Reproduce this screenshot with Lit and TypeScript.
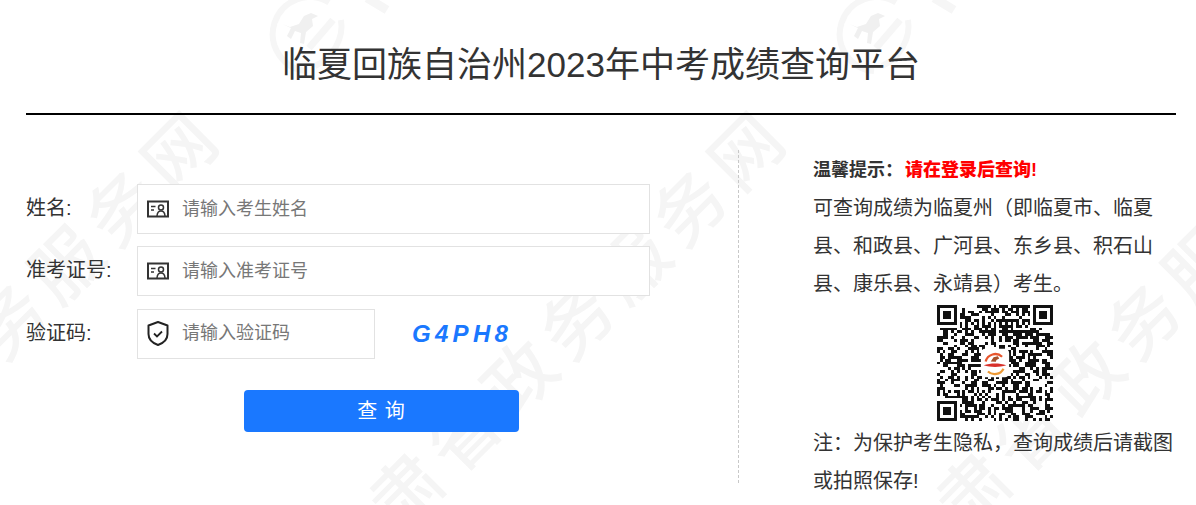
import { LitElement, css, html } from 'lit';
import { customElement } from 'lit/decorators.js';

// seeded so the fake QR modules stay put between runs
function qrPath(size: number): string {
  let seed = 20230;
  const rnd = () => {
    seed = (seed * 1103515245 + 12345) & 0x7fffffff;
    return (seed >> 12) % 100;
  };
  const cells: boolean[][] = [];
  for (let y = 0; y < size; y++) {
    cells.push([]);
    for (let x = 0; x < size; x++) cells[y].push(rnd() < 50);
  }
  const finder = (ox: number, oy: number) => {
    for (let y = -1; y < 8; y++) {
      for (let x = -1; x < 8; x++) {
        const px = ox + x;
        const py = oy + y;
        if (px < 0 || py < 0 || px >= size || py >= size) continue;
        const ring = x >= 0 && x <= 6 && y >= 0 && y <= 6 && (x === 0 || x === 6 || y === 0 || y === 6);
        const core = x >= 2 && x <= 4 && y >= 2 && y <= 4;
        cells[py][px] = ring || core;
      }
    }
  };
  finder(0, 0);
  finder(size - 7, 0);
  finder(0, size - 7);
  for (let i = 8; i < size - 8; i++) {
    cells[6][i] = i % 2 === 0;
    cells[i][6] = i % 2 === 0;
  }
  let d = '';
  cells.forEach((row, y) =>
    row.forEach((on, x) => {
      if (on) d += `M${x} ${y}h1v1h-1z`;
    })
  );
  return d;
}

const idIcon = html`<svg class="icon" width="22" height="18" viewBox="0 0 22 18">
  <rect x="1" y="1.500" width="20" height="15" fill="none" stroke="#333" stroke-width="2"></rect>
  <path d="M4 6.500h4.500M4 10h3" stroke="#333" stroke-width="1.500" fill="none"></path>
  <circle cx="14" cy="7.500" r="2.500" fill="none" stroke="#333" stroke-width="1.500"></circle>
  <path d="M10 16c.2-3.400 1.800-5 4-5s3.800 1.600 4 5" fill="none" stroke="#333" stroke-width="1.500"></path>
</svg>`;

const shieldIcon = html`<svg class="icon" width="22" height="25" viewBox="0 0 22 25">
  <path d="M11 1 20.500 4.500v8.500c0 5.300-3.800 9-9.500 11C5.300 22 1.500 18.300 1.500 13V4.500z" fill="none" stroke="#222" stroke-width="2" stroke-linejoin="round"></path>
  <path d="M7 12.500l3 3 5-5" fill="none" stroke="#222" stroke-width="1.800"></path>
</svg>`;

@customElement('app-root')
export class AppRoot extends LitElement {
  static styles = css`
    :host {
      display: block;
      position: relative;
      height: 505px;
      overflow: hidden;
      background: #fff;
      font-family: "Liberation Sans", "Noto Sans CJK SC", sans-serif;
      color: #333;
    }
    .marks {
      position: absolute;
      inset: 0;
      pointer-events: none;
    }
    .mark {
      position: absolute;
      white-space: nowrap;
      font-size: 70px;
      font-weight: 500;
      letter-spacing: 10px;
      line-height: 80px;
      color: #f5f5f5;
      transform-origin: 100% 50%;
      transform: translate(-100%, -50%) rotate(-45deg);
    }
    .logo {
      position: absolute;
    }
    .page {
      position: relative;
      padding: 0 20px 0 26px;
    }
    h1 {
      margin: 0;
      height: 113px;
      box-sizing: border-box;
      padding-top: 41px;
      font-size: 35px;
      line-height: 48px;
      font-weight: 400;
      text-align: center;
    }
    .rule {
      height: 2px;
      background: #000;
    }
    .content {
      display: flex;
      padding-top: 35px;
    }
    .form {
      width: 712px;
      flex: none;
      box-sizing: border-box;
      padding-top: 34px;
    }
    .row {
      display: flex;
      align-items: center;
      height: 50px;
      margin-bottom: 12.400px;
    }
    label {
      width: 111px;
      flex: none;
      padding-bottom: 5px;
      font-size: 20px;
    }
    .field {
      display: flex;
      align-items: center;
      box-sizing: border-box;
      width: 513px;
      height: 50px;
      padding-left: 9px;
      gap: 13px;
      border: 1px solid #e2e2e2;
      background: #fff;
    }
    .field.short {
      width: 238px;
    }
    .icon {
      flex: none;
    }
    input {
      flex: 1;
      min-width: 0;
      border: 0;
      outline: 0;
      padding: 0;
      background: transparent;
      font-family: inherit;
      font-size: 18px;
    }
    input::placeholder {
      color: #777;
    }
    .code {
      margin-left: 37px;
      font-size: 24px;
      font-weight: 700;
      font-style: italic;
      letter-spacing: 4.300px;
      color: #1a78ff;
    }
    .submit {
      display: block;
      width: 275px;
      height: 42px;
      margin: 30.800px 0 0 218px;
      padding: 0 0 2px;
      border: 0;
      border-radius: 4px;
      background: #1a78ff;
      color: #fff;
      font-family: inherit;
      font-size: 20px;
      letter-spacing: 1px;
    }
    .notes {
      flex: 1;
      height: 333px;
      padding-left: 74px;
      border-left: 1px dashed #c8c8c8;
      font-size: 20px;
      line-height: 38px;
    }
    .notes p {
      margin: 0;
    }
    .tip {
      padding-top: 2px;
      font-size: 18px;
      line-height: 37px;
      font-weight: 700;
    }
    .tip b {
      margin-left: 2px;
      color: #f00;
    }
    .qr {
      display: block;
      margin: 2px auto 3px;
    }
  `;

  private qr = qrPath(41);

  private marks() {
    return [0, 567, 1134].map(
      (dx) => html`
        <div class="mark" style="left:${212 + dx}px;top:121px">甘肃省政务服务网</div>
        <svg class="logo" style="left:${255 + dx}px;top:-10px" width="140" height="90" viewBox="0 0 140 90" fill="none" stroke="#f6f6f6">
          <path d="M74 12.500A37 37 0 1 0 52 81" stroke-width="6"></path>
          <path d="M86 30c3 18-8 38-26 46" stroke-width="6"></path>
          <path d="M54 58 78 30" stroke-width="7"></path>
          <path d="M27 34l8 3 9-3 5-8 7-3 7 3-6 3 1 7-7 6-2 12-4-1 1-10-6-2-4 8-4-3 4-8z" fill="#f0f0f0" stroke="none"></path>
          <path d="M112 8l20 12" stroke-width="9"></path>
        </svg>
      `
    );
  }

  render() {
    return html`
      <div class="marks">${this.marks()}</div>
      <div class="page">
        <h1>临夏回族自治州2023年中考成绩查询平台</h1>
        <div class="rule"></div>
        <div class="content">
          <div class="form">
            <div class="row">
              <label>姓名:</label>
              <div class="field">${idIcon}<input placeholder="请输入考生姓名" /></div>
            </div>
            <div class="row">
              <label>准考证号:</label>
              <div class="field">${idIcon}<input placeholder="请输入准考证号" /></div>
            </div>
            <div class="row">
              <label>验证码:</label>
              <div class="field short">${shieldIcon}<input placeholder="请输入验证码" /></div>
              <span class="code">G4PH8</span>
            </div>
            <button class="submit">查 询</button>
          </div>
          <div class="notes">
            <p class="tip">温馨提示：<b>请在登录后查询!</b></p>
            <p>可查询成绩为临夏州（即临夏市、临夏县、和政县、广河县、东乡县、积石山县、康乐县、永靖县）考生。</p>
            <svg class="qr" width="116" height="116" viewBox="0 0 41 41" shape-rendering="crispEdges">
              <path d=${this.qr} fill="#111"></path>
              <g shape-rendering="auto" fill="none">
                <rect x="15.500" y="15.500" width="10" height="10" rx="1.500" fill="#fff"></rect>
                <path d="M23 18.300A3.500 3.500 0 0 0 17.200 20" stroke="#e8552c" stroke-width="0.800"></path>
                <path d="M18 23.500A3.500 3.500 0 0 0 23.500 22.500" stroke="#ee9a35" stroke-width="0.800"></path>
                <path d="M16.500 21.300c2.500-.8 5.500-.8 8 0-2.500.8-5.500.8-8 0z" fill="#d8302a"></path>
                <path d="M19 20l1-1.500 1.500-.4.500.8-1 .5-.2.700z" fill="#a5502a"></path>
              </g>
            </svg>
            <p>注：为保护考生隐私，查询成绩后请截图或拍照保存!</p>
          </div>
        </div>
      </div>
    `;
  }
}
